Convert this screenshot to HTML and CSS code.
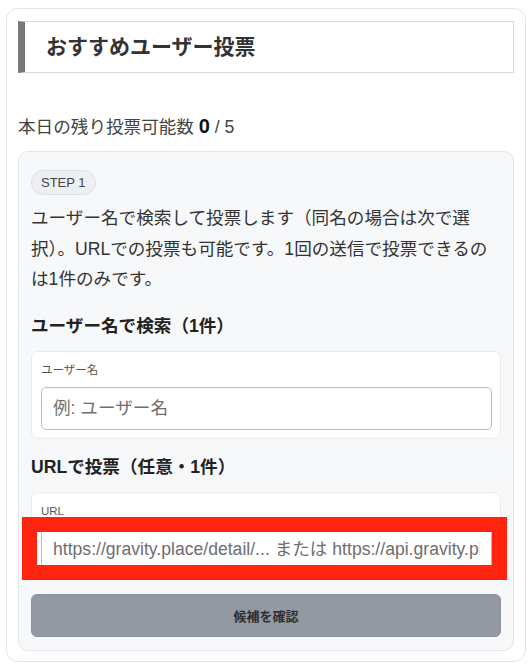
FILE: index.html
```html
<!DOCTYPE html>
<html lang="ja">
<head>
<meta charset="utf-8">
<title>おすすめユーザー投票</title>
<link rel="stylesheet" href="styles.css">
</head>
<body>
<div class="panel">
  <h2 class="panel-title">おすすめユーザー投票</h2>
  <p class="quota">本日の残り投票可能数 <strong class="quota-num">0</strong> / 5</p>
  <section class="step">
    <span class="pill">STEP 1</span>
    <p class="desc">ユーザー名で検索して投票します（同名の場合は次で選択）。URLでの投票も可能です。1回の送信で投票できるのは1件のみです。</p>
    <h3 class="sec">ユーザー名で検索（1件）</h3>
    <div class="field">
      <label class="field-label" for="uname">ユーザー名</label>
      <input class="input" id="uname" type="text" placeholder="例: ユーザー名">
    </div>
    <h3 class="sec">URLで投票（任意・1件）</h3>
    <div class="field">
      <label class="field-label" for="url">URL</label>
      <div class="input-wrap">
        <input class="input" id="url" type="text" placeholder="https://gravity.place/detail/... または https://api.gravity.place/...">
        <div class="highlight"></div>
      </div>
    </div>
    <button class="btn" type="button">候補を確認</button>
  </section>
</div>
</body>
</html>
```

FILE: styles.css
```css
* { box-sizing: border-box; }
html, body { background: #ffffff; }
body {
  margin: 8px 5px 0 6px;
  font-family: "Liberation Sans", "Noto Sans CJK JP", sans-serif;
  font-size: 17.6px;
  color: #333;
}
.panel {
  border: 1px solid #e4e4e4;
  border-radius: 12px;
  padding: 12px 11px 10px 11px;
  background: #fff;
}
.panel-title {
  margin: 0;
  height: 52px;
  border: 1px solid #d9d9d9;
  border-left: 7px solid #787878;
  padding-left: 21px;
  font-size: 21px;
  font-weight: 700;
  line-height: 50px;
  color: #333;
}
.quota {
  margin: 40px 0 11px;
  line-height: 26px;
  color: #444;
}
.quota-num {
  font-size: 20px;
  color: #111;
}
.step {
  display: flex;
  flex-direction: column;
  border: 1px solid #e3e6ea;
  background: #f7f8fa;
  border-radius: 10px;
  padding: 18px 12px 13px 12px;
}
.pill {
  align-self: flex-start;
  height: 25px;
  padding: 0 9px;
  border: 1px solid #dde1e6;
  background: #eceff3;
  border-radius: 13px;
  font-size: 13px;
  line-height: 23px;
  color: #444;
}
.desc {
  margin: 8px 0 3px;
  line-height: 30.5px;
  color: #333;
}
.sec {
  margin: 15px 0 12px;
  font-size: 17.6px;
  font-weight: 700;
  line-height: 26px;
  color: #222;
}
.field {
  display: flex;
  flex-direction: column;
  background: #fff;
  border: 1px solid #ebebeb;
  border-radius: 7px;
  padding: 9px 8px 8px 9px;
}
.field-label {
  font-size: 11.5px;
  line-height: 18px;
  color: #555;
  margin-bottom: 8px;
}
.input-wrap {
  position: relative;
}
.input {
  display: block;
  width: 100%;
  height: 43px;
  border: 1px solid #bdbdbd;
  border-radius: 5px;
  padding: 0 11px;
  font: inherit;
  font-size: 17.6px;
  color: #333;
  background: #fff;
}
.input::placeholder {
  color: #6e6e6e;
}
.highlight {
  position: absolute;
  top: -11px;
  left: -19px;
  right: -15px;
  bottom: -9px;
  border: 15px solid #ff2410;
  pointer-events: none;
}
.btn {
  margin-top: 14px;
  height: 43px;
  width: 100%;
  border: 1px solid #8b929c;
  border-radius: 6px;
  background: #9299a3;
  font-family: inherit;
  font-size: 13px;
  font-weight: 700;
  color: #2f2f2f;
}
```
